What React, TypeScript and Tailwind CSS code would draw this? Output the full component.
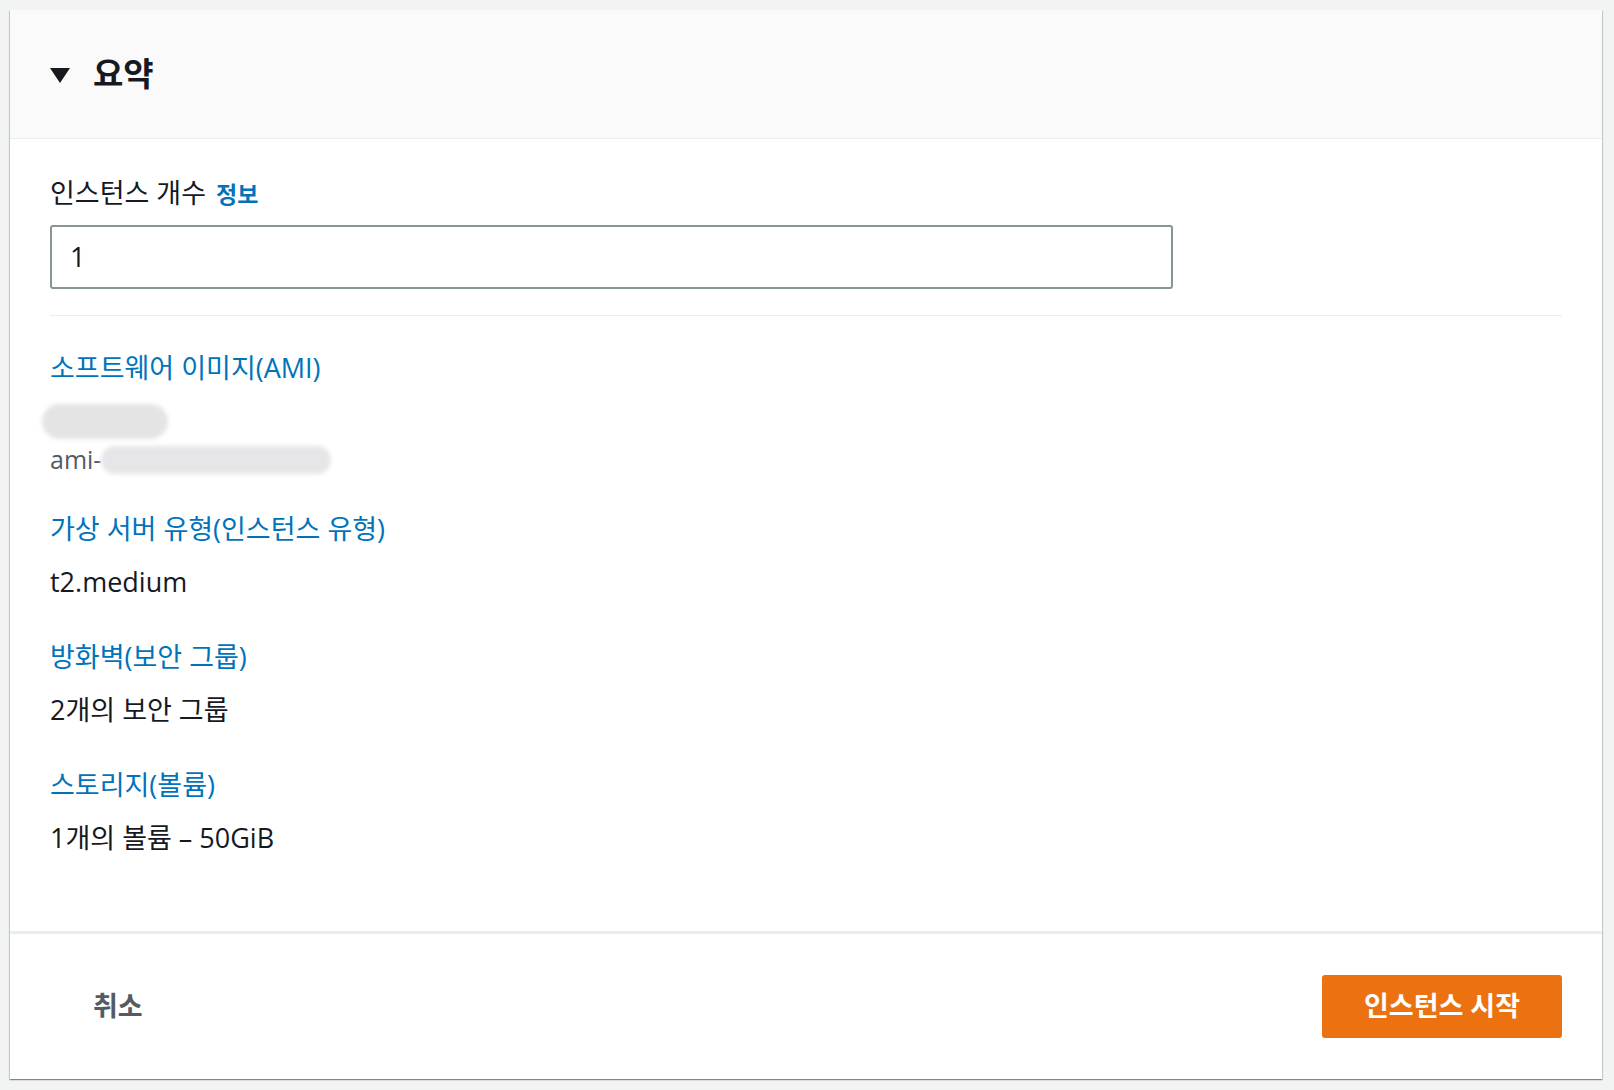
import React from "react";

const font = { fontFamily: '"Open Sans", "Noto Sans CJK KR", sans-serif' };

function Heading({ children }: { children: React.ReactNode }) {
  return <div className="text-[27px] leading-[32px] text-[#0073bb]">{children}</div>;
}

function Value({ children }: { children: React.ReactNode }) {
  return <div className="mt-[21px] text-[27px] leading-[32px] text-[#16191f]">{children}</div>;
}

export default function App() {
  return (
    <div style={font} className="w-[1614px] h-[1090px] bg-[#f2f3f3] pl-[10px] pt-[10px]">
      <div className="w-[1592px] h-[1069px] bg-white flex flex-col shadow-[0_1px_1px_0_rgba(0,28,36,0.3),1px_1px_1px_0_rgba(0,28,36,0.15),-1px_1px_1px_0_rgba(0,28,36,0.15)]">
        {/* header */}
        <div className="h-[129px] bg-[#fafafa] border-b border-[#eaeded] flex items-center px-[40px]">
          <svg width="20" height="15" viewBox="0 0 20 15" className="mt-[3px]">
            <polygon points="0,0 20,0 10,15" fill="#16191f" />
          </svg>
          <span className="ml-[23px] text-[33px] leading-[40px] font-bold text-[#16191f]">요약</span>
        </div>

        {/* body */}
        <div className="flex-1 px-[40px] pt-[38px]">
          <div className="flex items-baseline text-[27px] leading-[32px] text-[#16191f]">
            <span>인스턴스 개수</span>
            <span className="ml-[10px] text-[23px] font-bold text-[#0073bb]">정보</span>
          </div>
          <div className="mt-[15px] w-[1123px] h-[64px] border-2 border-[#879596] rounded-[3px] flex items-center pl-[18px] text-[27px] text-[#16191f]">
            1
          </div>
          <div className="mt-[26px] h-px bg-[#eaeded]" />

          <div className="mt-[36px]">
            <Heading>소프트웨어 이미지(AMI)</Heading>
            <div className="mt-[20px] h-[35px] relative">
              <div className="absolute left-[-8px] top-0 w-[126px] h-[35px] rounded-full bg-[#e4e4e4] blur-[2px]" />
            </div>
            <div className="mt-[7px] h-[28px] flex items-center text-[25px] text-[#545b64]">
              <span>ami-</span>
              <div className="w-[230px] h-[28px] rounded-full bg-[#e6e6e8] blur-[2px]" />
            </div>
          </div>

          <div className="mt-[39px]">
            <Heading>가상 서버 유형(인스턴스 유형)</Heading>
            <Value>t2.medium</Value>
          </div>

          <div className="mt-[43px]">
            <Heading>방화벽(보안 그룹)</Heading>
            <Value>2개의 보안 그룹</Value>
          </div>

          <div className="mt-[43px]">
            <Heading>스토리지(볼륨)</Heading>
            <Value>1개의 볼륨 – 50GiB</Value>
          </div>
        </div>

        {/* footer */}
        <div className="h-[3px] bg-[#eaeded]" />
        <div className="h-[145px] flex items-center justify-between px-[40px]">
          <button className="ml-[43px] text-[27px] font-bold text-[#545b64]">취소</button>
          <button className="w-[240px] h-[63px] rounded-[3px] bg-[#ec7211] text-white text-[27px] font-bold">
            인스턴스 시작
          </button>
        </div>
      </div>
    </div>
  );
}
